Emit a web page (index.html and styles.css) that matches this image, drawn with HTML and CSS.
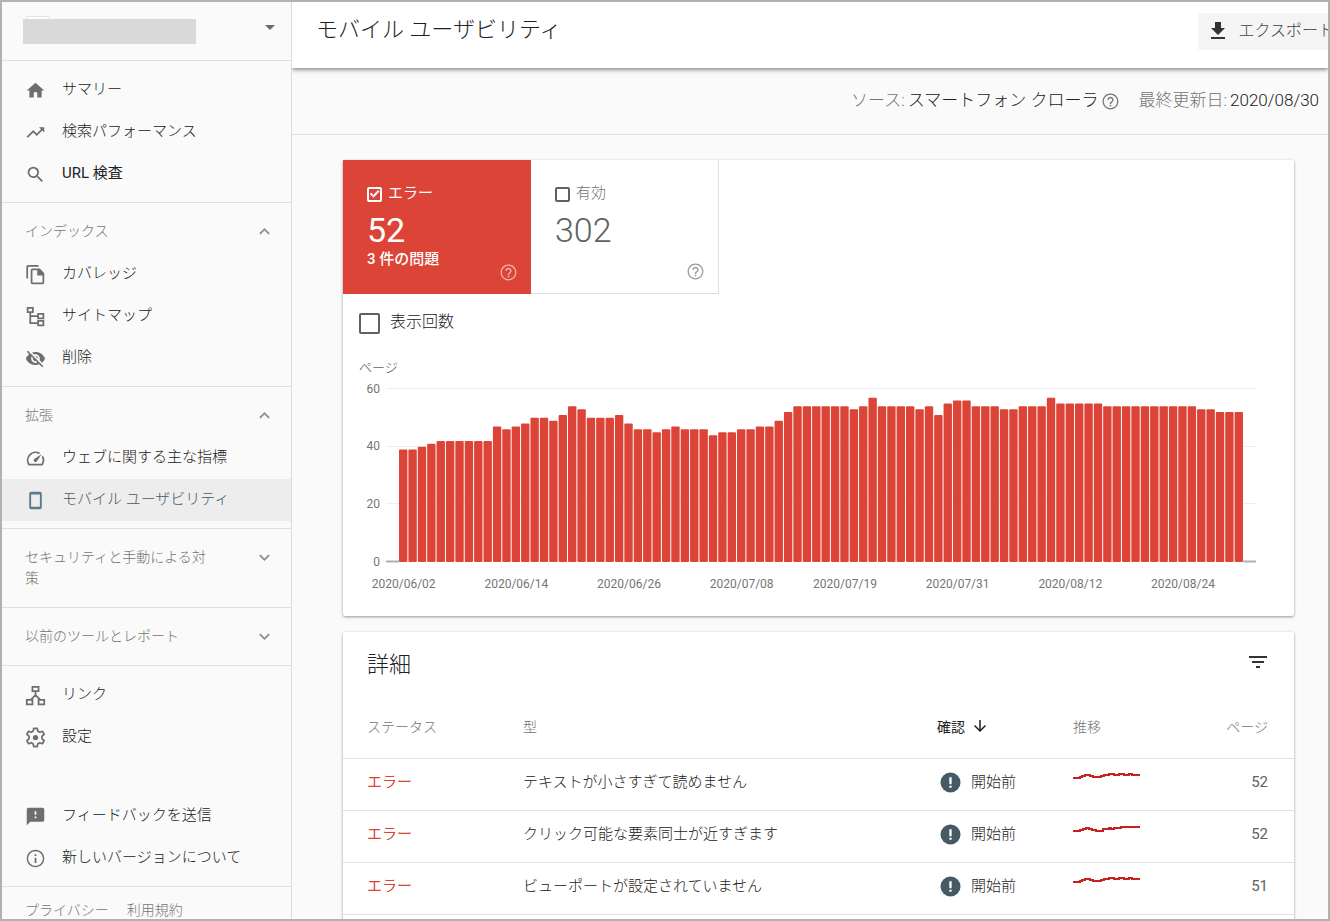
FILE: index.html
```html
<!DOCTYPE html>
<html lang="ja">
<head>
<meta charset="utf-8">
<title>モバイル ユーザビリティ</title>
<link rel="stylesheet" href="styles.css">
</head>
<body>
<svg class="defs" aria-hidden="true">
  <symbol id="i-help" viewBox="0 0 24 24"><path d="M11 18h2v-2h-2v2zm1-16C6.48 2 2 6.48 2 12s4.48 10 10 10 10-4.48 10-10S17.52 2 12 2zm0 18.400c-4.630 0-8.400-3.770-8.400-8.400S7.370 3.600 12 3.600s8.400 3.770 8.400 8.400-3.770 8.400-8.400 8.400zm0-14.400c-2.21 0-4 1.79-4 4h1.800c0-1.200 1-2.200 2.200-2.200s2.200 1 2.200 2.200c0 2-3.100 1.750-3.100 5h1.800c0-2.250 3.100-2.500 3.100-5 0-2.21-1.79-4-4-4z"/></symbol>
  <symbol id="i-up" viewBox="0 0 24 24"><path d="M12 8l-6 6 1.41 1.41L12 10.83l4.59 4.58L18 14z"/></symbol>
  <symbol id="i-down" viewBox="0 0 24 24"><path d="M16.59 8.59L12 13.17 7.41 8.59 6 10l6 6 6-6z"/></symbol>
  <symbol id="i-alert" viewBox="0 0 22 22"><circle cx="11" cy="11" r="10.5"/><path fill="#fff" d="M9.8 5.4h2.4v7.4H9.8zM9.8 14.4h2.4v2.2H9.8z"/></symbol>
</svg>
<div class="app">
  <nav class="sidebar" aria-label="メニュー">
    <button class="property" type="button" aria-label="プロパティを選択">
      <span class="property-logo"></span>
      <span class="property-name"></span>
      <span class="caret"></span>
    </button>
    <div class="group">
      <a class="item" href="#"><svg viewBox="0 0 24 24"><path d="M10 20v-6h4v6h5v-8h3L12 3 2 12h3v8z"/></svg>サマリー</a>
      <a class="item" href="#"><svg viewBox="0 0 24 24"><path d="M16 6l2.29 2.29-4.88 4.88-4-4L2 16.59 3.41 18l6-6 4 4 6.3-6.29L22 12V6z"/></svg>検索パフォーマンス</a>
      <a class="item latin" href="#"><svg viewBox="0 0 24 24"><path d="M15.5 14h-.79l-.28-.27A6.471 6.471 0 0 0 16 9.5 6.5 6.5 0 1 0 9.5 16c1.61 0 3.09-.59 4.23-1.57l.27.28v.79l5 4.99L20.49 19l-4.99-5zm-6 0C7.01 14 5 11.99 5 9.5S7.01 5 9.5 5 14 7.01 14 9.5 11.99 14 9.5 14z"/></svg>URL 検査</a>
    </div>
    <div class="group">
      <button class="heading" type="button"><span>インデックス</span><svg><use href="#i-up"/></svg></button>
      <a class="item" href="#"><svg viewBox="0 0 24 24"><path d="M15.500 1H3.500Q1.500 1 1.500 3v13.500h2V3h12zM17 5H8.500q-2 0-2 2v14q0 2 2 2H20q2 0 2-2V10.500zM8.500 21V7H14v6h6v8z"/></svg>カバレッジ</a>
      <a class="item" href="#"><svg viewBox="0 0 24 24" class="line"><path d="M3 2h6v5H3zM15 9h6v5h-6zM15 17h6v5h-6zM6 7v12.500h9M6 11.500h9"/></svg>サイトマップ</a>
      <a class="item" href="#"><svg viewBox="0 0 24 24"><path d="M12 7c2.760 0 5 2.240 5 5 0 .65-.13 1.260-.36 1.830l2.920 2.920c1.510-1.260 2.700-2.890 3.430-4.750-1.730-4.390-6-7.500-11-7.500-1.400 0-2.740.25-3.980.7l2.160 2.160C10.740 7.130 11.350 7 12 7zM2 4.270l2.280 2.280.46.46C3.080 8.300 1.780 10.020 1 12c1.730 4.390 6 7.500 11 7.500 1.550 0 3.030-.3 4.380-.84l.42.42L19.730 22 21 20.730 3.270 3 2 4.270zM7.530 9.800l1.550 1.550c-.05.21-.08.43-.08.65 0 1.660 1.340 3 3 3 .22 0 .44-.03.65-.08l1.550 1.550c-.67.33-1.410.53-2.200.53-2.760 0-5-2.240-5-5 0-.79.2-1.530.53-2.200zm4.310-.78l3.150 3.150.02-.16c0-1.660-1.340-3-3-3l-.17.01z"/></svg>削除</a>
    </div>
    <div class="group">
      <button class="heading" type="button"><span>拡張</span><svg><use href="#i-up"/></svg></button>
      <a class="item" href="#"><svg viewBox="0 0 24 24"><path d="M20.380 8.570l-1.230 1.850a8 8 0 0 1-.22 7.580H5.070A8 8 0 0 1 15.580 6.850l1.850-1.230A10 10 0 0 0 3.350 19a2 2 0 0 0 1.720 1h13.850a2 2 0 0 0 1.740-1 10 10 0 0 0-.27-10.440zM10.590 15.410a2 2 0 0 0 2.830 0l5.660-8.490-8.490 5.660a2 2 0 0 0 0 2.830z"/></svg>ウェブに関する主な指標</a>
      <a class="item active" href="#" aria-current="page"><svg viewBox="0 0 24 24"><path d="M7 2h10q2.200 0 2.200 2.200v15.600q0 2.200-2.200 2.200H7q-2.200 0-2.200-2.200V4.200Q4.800 2 7 2zM7 5v14h10V5z"/></svg>モバイル ユーザビリティ</a>
    </div>
    <div class="group closed">
      <button class="heading" type="button"><span>セキュリティと手動による対策</span><svg><use href="#i-down"/></svg></button>
    </div>
    <div class="group closed">
      <button class="heading" type="button"><span>以前のツールとレポート</span><svg><use href="#i-down"/></svg></button>
    </div>
    <div class="group">
      <a class="item" href="#"><svg viewBox="0 0 24 24" class="line"><path d="M8.500 2h7v5h-7zM2 17h6.500v5H2zM15.500 17H22v5h-6.500zM12 7v5M12 11.500L6.500 17M12 11.500l5.500 5.500"/></svg>リンク</a>
      <a class="item" href="#"><svg viewBox="0 0 24 24"><path fill="none" stroke="currentColor" stroke-width="2" stroke-linejoin="round" d="M10 1.500h4l.6 3.200 2.200 1.300 3.100-1.100 2 3.500-2.500 2.100v2.900l2.500 2.200-2 3.500-3.100-1.100-2.200 1.300-.6 3.200h-4l-.6-3.200L7.200 18l-3.100 1.100-2-3.500 2.500-2.200v-2.900L2.100 8.400l2-3.500L7.200 6l2.200-1.300z"/><circle cx="12" cy="12" r="3"/></svg>設定</a>
      <div class="gap"></div>
      <a class="item" href="#"><svg viewBox="0 0 24 24"><path d="M20 2H4c-1.100 0-1.990.9-1.990 2L2 22l4-4h14c1.100 0 2-.9 2-2V4c0-1.100-.9-2-2-2zm-7 12h-2v-2h2v2zm0-4h-2V6h2v4z"/></svg>フィードバックを送信</a>
      <a class="item" href="#"><svg viewBox="0 0 24 24"><path d="M11 17h2v-6h-2v6zm1-15C6.480 2 2 6.480 2 12s4.480 10 10 10 10-4.480 10-10S17.520 2 12 2zm0 18.400c-4.600 0-8.400-3.800-8.400-8.400S7.400 3.600 12 3.600s8.400 3.800 8.400 8.400-3.800 8.400-8.400 8.400zM11 9h2V7h-2v2z"/></svg>新しいバージョンについて</a>
    </div>
    <div class="legal"><a href="#">プライバシー</a><a href="#">利用規約</a></div>
  </nav>

  <main class="main">
    <header class="topbar">
      <h1>モバイル ユーザビリティ</h1>
      <button class="export" type="button"><svg viewBox="0 0 24 24"><path d="M19 9h-4V3H9v6H5l7 7 7-7zM5 18v2h14v-2H5z"/></svg>エクスポート</button>
    </header>
    <div class="meta">
      <div class="meta-item"><span>ソース:</span> <b>スマートフォン クローラ</b><svg class="help"><use href="#i-help"/></svg></div>
      <div class="meta-item"><span>最終更新日:</span> <b>2020/08/30</b></div>
    </div>
    <div class="content">
      <section class="card">
        <div class="tiles">
          <div class="tile error">
            <label><input class="check" type="checkbox" checked>エラー</label>
            <strong>52</strong>
            <em>3 件の問題</em>
            <svg class="help"><use href="#i-help"/></svg>
          </div>
          <div class="tile valid">
            <label><input class="check" type="checkbox">有効</label>
            <strong>302</strong>
            <svg class="help"><use href="#i-help"/></svg>
          </div>
        </div>
        <label class="impressions"><input class="check large" type="checkbox">表示回数</label>
        <div class="axis-title">ページ</div>
        <svg class="chart" viewBox="0 0 951 238" role="img" aria-label="ページ数の推移">
          <path class="grid" d="M43 10.500H913M43 68.500H913M43 125.500H913"/>
          <g id="bars" class="bars"></g>
          <path class="base" d="M43 183.500H56M900 183.500H913"/>
          <g class="ticks">
            <text x="37" y="15">60</text><text x="37" y="72">40</text><text x="37" y="130">20</text><text x="37" y="188">0</text>
          </g>
          <g id="dates" class="dates"></g>
        </svg>
      </section>

      <section class="card">
        <div class="details-head">
          <h2>詳細</h2>
          <button class="filter" type="button" aria-label="フィルタ"><svg viewBox="0 0 24 24"><path d="M10 18h4v-2h-4v2zM3 6v2h18V6H3zm3 7h12v-2H6v2z"/></svg></button>
        </div>
        <table>
          <colgroup><col class="c-status"><col><col class="c-check"><col class="c-trend"><col class="c-pages"></colgroup>
          <thead>
            <tr><th>ステータス</th><th>型</th><th class="sorted">確認<svg viewBox="0 0 24 24"><path d="M20 12l-1.410-1.410L13 16.170V4h-2v12.170l-5.580-5.590L4 12l8 8 8-8z"/></svg></th><th>推移</th><th class="num">ページ</th></tr>
          </thead>
          <tbody>
            <tr><td class="status">エラー</td><td>テキストが小さすぎて読めません</td><td><span class="state"><svg><use href="#i-alert"/></svg>開始前</span></td><td><svg class="spark" viewBox="0 0 68 16"><path d="M0 10h7v-1h2v-1h3v-1h5v1h3v1h8v-1h3v-1h5v-1h5v1h5v-1h5v1h5v-1h3v1h8"/></svg></td><td class="num">52</td></tr>
            <tr><td class="status">エラー</td><td>クリック可能な要素同士が近すぎます</td><td><span class="state"><svg><use href="#i-alert"/></svg>開始前</span></td><td><svg class="spark" viewBox="0 0 68 16"><path d="M0 12v-1h7v-1h3v-1h3v-1h3v1h3v1h4v1h7v-2h6v-1h2v1h3v-1h7v-1h4v-1v1h15"/></svg></td><td class="num">52</td></tr>
            <tr><td class="status">エラー</td><td>ビューポートが設定されていません</td><td><span class="state"><svg><use href="#i-alert"/></svg>開始前</span></td><td><svg class="spark" viewBox="0 0 68 16"><path d="M0 10h7v-1h2v-1h3v-1h5v1h3v1h8v-1h3v-1h5v-1h5v1h5v-1h5v1h5v-1h3v1h8"/></svg></td><td class="num">51</td></tr>
            <tr><td></td><td></td><td></td><td></td><td></td></tr>
          </tbody>
        </table>
      </section>
    </div>
  </main>
</div>
<script src="chart.js"></script>
</body>
</html>
```

FILE: chart.js
```js
// Daily count of pages with errors, one value per day.
const values = [
  39, 39, 40, 41, 42, 42, 42, 42, 42, 42, 47, 46, 47, 48, 50, 50, 49, 51, 54, 53,
  50, 50, 50, 51, 48, 46, 46, 45, 46, 47, 46, 46, 46, 44, 45, 45, 46, 46, 47, 47,
  49, 52, 54, 54, 54, 54, 54, 54, 53, 54, 57, 54, 54, 54, 54, 53, 54, 51, 55, 56,
  56, 54, 54, 54, 53, 53, 54, 54, 54, 57, 55, 55, 55, 55, 55, 54, 54, 54, 54, 54,
  54, 54, 54, 54, 54, 53, 53, 52, 52, 52
];
// Label text keyed by the index of the bar that it stands under.
const labels = {
  0: '2020/06/02', 12: '2020/06/14', 24: '2020/06/26', 36: '2020/07/08',
  47: '2020/07/19', 59: '2020/07/31', 71: '2020/08/12', 83: '2020/08/24'
};
const NS = 'http://www.w3.org/2000/svg';
const left = 56, width = 845, base = 184, unit = 173 / 60;
const step = width / values.length;
const bars = document.getElementById('bars');
const dates = document.getElementById('dates');

values.forEach((value, i) => {
  const rect = document.createElementNS(NS, 'rect');
  rect.setAttribute('x', left + i * step);
  rect.setAttribute('y', base - value * unit);
  rect.setAttribute('width', step - 1);
  rect.setAttribute('height', value * unit);
  rect.setAttribute('rx', 1);
  bars.appendChild(rect);
  if (labels[i]) {
    const text = document.createElementNS(NS, 'text');
    text.setAttribute('x', left + (i + 0.5) * step);
    text.setAttribute('y', 210);
    text.textContent = labels[i];
    dates.appendChild(text);
  }
});
```

FILE: styles.css
```css
* { box-sizing: border-box; }

body {
  margin: 0;
  color: #212121;
  font-family: Roboto, "Noto Sans CJK JP", sans-serif;
  font-size: 15px;
  font-weight: 300;
  line-height: 20px;
}

button { border: 0; padding: 0; background: none; color: inherit; font: inherit; text-align: left; }
a { color: inherit; text-decoration: none; }
svg { fill: currentColor; flex: none; }
.defs { position: absolute; width: 0; height: 0; }

.app {
  display: flex;
  height: 100vh;
  overflow: hidden;
  border: 2px solid #b2b2b2;
  background: #fafafa;
}

/* Sidebar */
.sidebar {
  flex: 0 0 290px;
  border-right: 1px solid #dcdcdc;
  overflow: hidden;
}
.property {
  position: relative;
  display: flex;
  align-items: center;
  justify-content: space-between;
  width: 100%;
  height: 58px;
  padding: 0 16px 0 21px;
}
.property-logo {
  position: absolute;
  left: 24px;
  top: 14px;
  width: 24px;
  height: 20px;
  border: 1px solid #e4e4e4;
  border-radius: 2px;
  background: #fff;
}
.property-name { position: relative; width: 173px; height: 25px; background: #d9d9d9; }
.caret {
  border: 5px solid transparent;
  border-top-color: #6b6b6b;
  border-bottom: 0;
  margin-bottom: 8px;
}
.group { border-top: 1px solid #dfdfdf; padding: 8px 0 7px; }
.item {
  display: flex;
  align-items: center;
  gap: 16px;
  height: 42px;
  padding: 0 23px 2px;
}
.latin { font-weight: 400; }
.item svg { width: 21px; height: 21px; margin-top: 3px; color: #6e6e6e; }
.item svg.line { fill: none; stroke: currentColor; stroke-width: 2; }
.item.active { background: #ededed; color: #455a64; }
.item.active svg { color: #5b7c8d; }
.heading {
  display: flex;
  align-items: flex-start;
  justify-content: space-between;
  width: 100%;
  padding: 10px 16px 11px 23px;
  color: #757575;
  font-size: 14px;
  line-height: 21px;
}
.heading span { max-width: 188px; }
.heading svg { width: 21px; height: 21px; color: #8c8c8c; }
.closed { padding: 8px 0 7px; }
.gap { height: 37px; }
.legal {
  display: flex;
  gap: 18px;
  border-top: 1px solid #dfdfdf;
  padding: 13px 23px;
  color: #757575;
  font-size: 14px;
}

/* Header */
.main { flex: 1; min-width: 0; overflow: hidden; }
.topbar {
  position: relative;
  display: flex;
  align-items: center;
  justify-content: space-between;
  height: 66px;
  padding: 0 0 8px 24px;
  background: #fff;
  box-shadow: 0 1px 5px rgba(0, 0, 0, .6);
}
h1, h2 { margin: 0; font-size: 22px; font-weight: 300; line-height: 32px; }
h1 { padding-bottom: 2px; }
.export {
  display: flex;
  align-items: center;
  gap: 8px;
  height: 37px;
  margin-right: -14px;
  padding: 0 8px;
  border-radius: 2px;
  background: #f5f5f5;
  color: #424242;
  font-size: 16px;
  white-space: nowrap;
}
.export svg { width: 24px; height: 24px; color: #333; }
.meta {
  display: flex;
  align-items: center;
  justify-content: flex-end;
  gap: 18px;
  height: 67px;
  padding: 0 9px 2px 0;
  border-bottom: 1px solid #dfdfdf;
  color: #757575;
  font-size: 17px;
}
.meta-item { display: flex; align-items: center; gap: 3px; }
.meta b { color: #212121; font-weight: inherit; }
.help { width: 19px; height: 19px; color: #757575; }
.meta .help { margin-top: 2px; }

/* Cards */
.content { display: grid; gap: 16px; padding: 25px 34px 0 51px; }
.card {
  border-radius: 2px;
  background: #fff;
  box-shadow: 0 1px 3px rgba(0, 0, 0, .4);
}
.tiles { display: flex; }
.tile {
  position: relative;
  display: flex;
  flex-direction: column;
  width: 188px;
  height: 134px;
  padding: 23px 24px;
  color: #757575;
}
.tile label { display: flex; align-items: center; gap: 6px; }
.tile strong { font-size: 34px; font-weight: 400; line-height: 38px; margin-top: 8px; }
.tile em { font-style: normal; font-weight: 500; line-height: 20px; }
.tile .help { position: absolute; right: 13px; bottom: 12px; color: #9a9a9a; }
.error { background: #db4437; color: #fff; font-weight: 400; }
.error .help { color: #f0b4af; }
.valid { border-right: 1px solid #dfdfdf; border-bottom: 1px solid #dfdfdf; }
.valid strong { font-weight: 300; color: #616161; }

.check {
  appearance: none;
  width: 15px;
  height: 15px;
  margin: 2px 0 0;
  border: 2px solid currentColor;
  border-radius: 2px;
  color: #616161;
}
.check:checked { color: #fff; }
.check:checked::before {
  content: "";
  display: block;
  width: 11px;
  height: 11px;
  background: currentColor;
  clip-path: polygon(8% 50%, 20% 38%, 40% 58%, 82% 14%, 95% 27%, 40% 84%);
}
.check.large { width: 21px; height: 21px; }
.impressions {
  display: flex;
  align-items: center;
  gap: 10px;
  width: max-content;
  margin: 16px 0 0 16px;
  font-size: 16px;
  line-height: 24px;
}
.axis-title { margin: 24px 0 0 16px; color: #616161; font-size: 13px; }
.chart { display: block; width: 100%; font-size: 12px; font-weight: 400; }
.grid { stroke: #efefef; }
.base { stroke: #b0b0b0; stroke-width: 2; }
.bars { fill: #db4437; }
.ticks { fill: #757575; text-anchor: end; }
.dates { fill: #757575; text-anchor: middle; }

/* Details table */
.details-head {
  display: flex;
  align-items: center;
  justify-content: space-between;
  height: 66px;
  padding: 0 24px;
}
.filter { display: flex; padding-bottom: 6px; color: #333; }
.filter svg { width: 24px; height: 24px; }
table { width: 100%; border-collapse: collapse; table-layout: fixed; }
.c-status { width: 180px; }
.c-check { width: 136px; }
.c-trend { width: 121px; }
.c-pages { width: 100px; }
th, td { padding: 0; text-align: left; border-bottom: 1px solid #e2e2e2; }
th { height: 60px; padding-bottom: 2px; color: #757575; font-size: 14px; font-weight: 300; }
td { height: 52px; padding-bottom: 5px; }
th:first-child, td:first-child { padding-left: 24px; }
th.num, td.num { padding-right: 26px; text-align: right; }
td.num { font-weight: 400; color: #616161; }
.sorted { color: #212121; font-weight: 400; }
.sorted svg { width: 18px; height: 18px; margin-left: 6px; vertical-align: -3px; }
.status { color: #db4437; font-weight: 400; }
.state { display: flex; align-items: center; gap: 10px; padding-left: 3px; }
.state svg { width: 21px; height: 21px; margin-top: 2px; color: #455a64; }
.spark {
  display: block;
  width: 68px;
  height: 16px;
  margin-bottom: 12px;
  fill: none;
  stroke: #c5221f;
  stroke-width: 2;
}
```
